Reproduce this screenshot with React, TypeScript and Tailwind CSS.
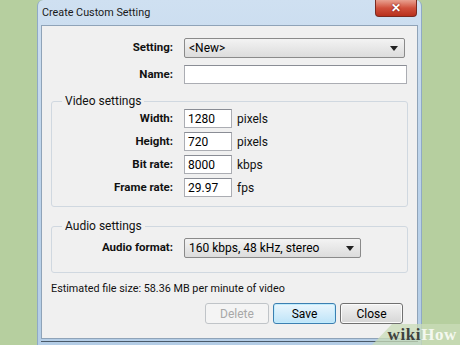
import React from 'react';

const font = { fontFamily: 'Roboto, "Noto Sans", sans-serif' };

const Caret = () => (
  <svg width="8" height="5" viewBox="0 0 8 5" className="shrink-0">
    <path d="M0 0 H8 L4 5 Z" fill="#222" />
  </svg>
);

const Dropdown = ({ value, width }: { value: string; width: string }) => (
  <div
    className={`${width} h-[20px] flex items-center justify-between pl-[4px] pr-[6px] rounded-[2px] border border-[#8a8a8a] bg-gradient-to-b from-[#f3f3f3] to-[#dcdcdc] text-[12px] text-black`}
  >
    <span>{value}</span>
    <Caret />
  </div>
);

const Field = ({ label, value, unit }: { label: string; value: string; unit: string }) => (
  <div className="flex items-center h-[19px]">
    <span className="w-[121px] text-right font-bold text-[11.5px] text-[#111]">{label}</span>
    <div className="ml-[11px] w-[48px] h-[19px] border border-[#abadb3] border-t-[#8a8d95] bg-white pl-[3px] flex items-center text-[12px] text-black">
      {value}
    </div>
    <span className="ml-[5px] text-[12px] text-[#111]">{unit}</span>
  </div>
);

export default function App() {
  return (
    <div className="relative w-[460px] h-[345px] overflow-hidden bg-[#b6cf9f] flex pl-[37px]" style={font}>
      {/* window frame */}
      <div className="w-[385px] h-[345px] flex flex-col bg-gradient-to-b from-[#cfe0f1] via-[#bcd3eb] to-[#b4cde6] border-x border-[#8fa9c6] rounded-t-[6px]">
        {/* title bar */}
        <div className="h-[25px] flex items-start justify-between pl-[4px] pr-[4px]">
          <span className="mt-[5px] text-[10.8px] leading-[15px] text-[#1a1a1a]">Create Custom Setting</span>
          <div className="w-[42px] h-[17px] rounded-b-[4px] border border-t-0 border-[#7a2a20] bg-gradient-to-b from-[#e8a090] via-[#d0503c] to-[#b8301c] flex items-center justify-center">
            <span className="text-white font-bold text-[12px] leading-none" style={{ textShadow: '0 0 2px #600' }}>
              ✕
            </span>
          </div>
        </div>

        {/* client area */}
        <div className="mx-[3px] h-[314px] bg-[#f0f0f0] border border-[#8fa3b8] flex flex-col text-[#111]">
          <div className="flex items-center mt-[12px] h-[20px]">
            <span className="w-[131px] text-right font-bold text-[11.5px]">Setting:</span>
            <div className="ml-[11px]">
              <Dropdown value="<New>" width="w-[221px]" />
            </div>
          </div>
          <div className="flex items-center mt-[7px] h-[19px]">
            <span className="w-[131px] text-right font-bold text-[11.5px]">Name:</span>
            <div className="ml-[11px] w-[223px] h-[19px] border border-[#abadb3] border-t-[#8a8d95] bg-white" />
          </div>

          <fieldset className="mt-[9px] ml-[9px] w-[357px] border border-[#d0d8e0] rounded-[3px] pb-[9px]">
            <legend className="ml-[10px] px-[3px] text-[12px] leading-[16px]">Video settings</legend>
            <div className="flex flex-col gap-[4px]">
              <Field label="Width:" value="1280" unit="pixels" />
              <Field label="Height:" value="720" unit="pixels" />
              <Field label="Bit rate:" value="8000" unit="kbps" />
              <Field label="Frame rate:" value="29.97" unit="fps" />
            </div>
          </fieldset>

          <fieldset className="mt-[11px] ml-[9px] w-[357px] border border-[#d0d8e0] rounded-[3px] pt-[4px] pb-[14px]">
            <legend className="ml-[10px] px-[3px] text-[12px] leading-[16px]">Audio settings</legend>
            <div className="flex items-center">
              <span className="w-[121px] text-right font-bold text-[11.5px]">Audio format:</span>
              <div className="ml-[11px]">
                <Dropdown value="160 kbps, 48 kHz, stereo" width="w-[177px]" />
              </div>
            </div>
          </fieldset>

          <div className="mt-[8px] ml-[9px] text-[10.8px] leading-[16px]">Estimated file size: 58.36 MB per minute of video</div>

          <div className="mt-[6px] flex justify-end gap-[4px] pr-[14px]">
            <button className="w-[64px] h-[21px] rounded-[3px] border border-[#c0c4c8] bg-[#f4f4f4] text-[12px] text-[#a8a8a8]">
              Delete
            </button>
            <button className="w-[63px] h-[21px] rounded-[3px] border border-[#3c7fb1] bg-gradient-to-b from-[#eaf6fd] to-[#bee4f8] text-[12px] text-black shadow-[inset_0_0_0_1px_#c0ecfd]">
              Save
            </button>
            <button className="w-[63px] h-[21px] rounded-[3px] border border-[#707070] bg-gradient-to-b from-[#f2f2f2] to-[#d6d6d6] text-[12px] text-black shadow-[inset_0_0_0_1px_#fbfbfb]">
              Close
            </button>
          </div>
        </div>
        <div className="mx-[3px] h-[1px] bg-[#4a5a6a] mt-[2px]" />
      </div>

      {/* wikiHow watermark */}
      <div className="absolute right-0 bottom-0 w-[90px] h-[21px]">
        <svg width="90" height="21" viewBox="0 0 90 21" className="absolute inset-0">
          <polygon points="22,0 90,0 90,21 2,21" fill="#c9dcb8" fillOpacity="0.75" />
        </svg>
        <div
          className="absolute right-[3px] top-[1px] text-[17px] font-bold leading-[19px] tracking-[0.6px]"
          style={{ fontFamily: '"Liberation Serif", "DejaVu Serif", serif' }}
        >
          <span className="text-[#3f423d]">wiki</span>
          <span className="text-[#f4f8ef]">How</span>
        </div>
      </div>
    </div>
  );
}
